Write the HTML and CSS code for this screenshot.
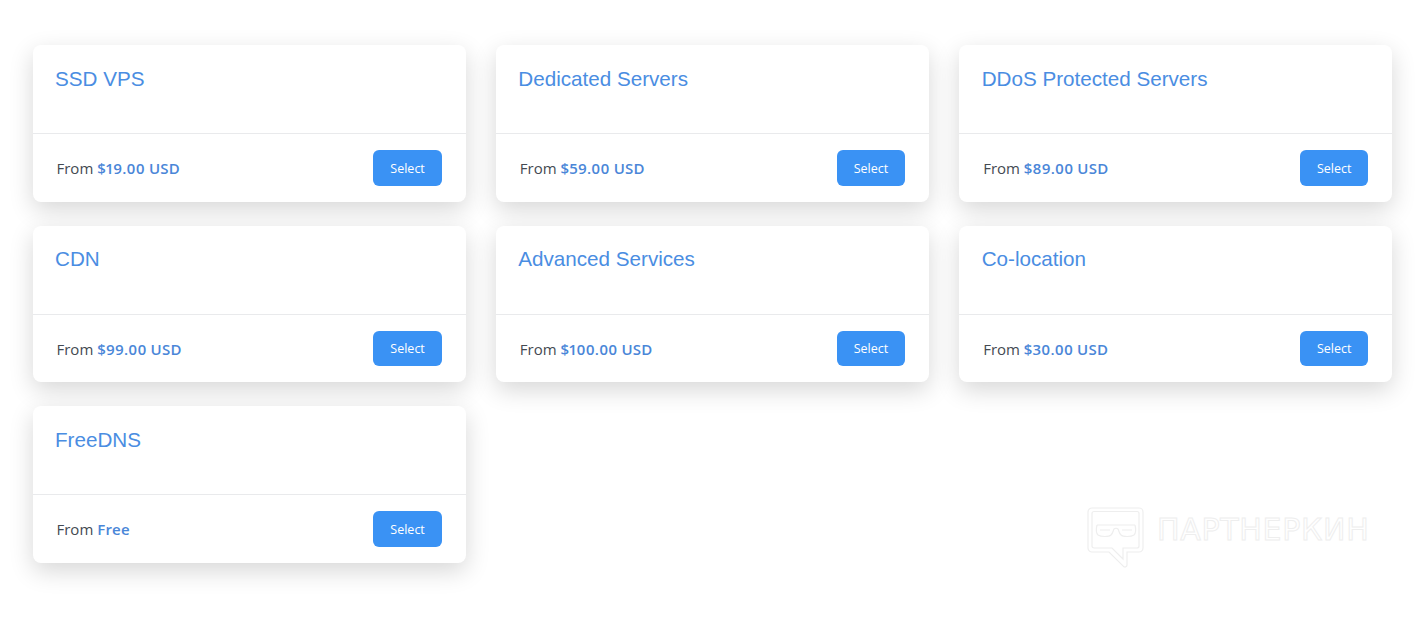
FILE: index.html
```html
<!DOCTYPE html>
<html lang="en">
<head>
<meta charset="utf-8">
<title>Products</title>
<link rel="stylesheet" href="styles.css">
</head>
<body>
<main class="grid">
  <article class="card"><h3 class="title">SSD VPS</h3><div class="foot"><span class="price">From <b>$19.00 USD</b></span><a class="btn">Select</a></div></article>
  <article class="card"><h3 class="title">Dedicated Servers</h3><div class="foot"><span class="price">From <b>$59.00 USD</b></span><a class="btn">Select</a></div></article>
  <article class="card"><h3 class="title">DDoS Protected Servers</h3><div class="foot"><span class="price">From <b>$89.00 USD</b></span><a class="btn">Select</a></div></article>
  <article class="card"><h3 class="title">CDN</h3><div class="foot"><span class="price">From <b>$99.00 USD</b></span><a class="btn">Select</a></div></article>
  <article class="card"><h3 class="title">Advanced Services</h3><div class="foot"><span class="price">From <b>$100.00 USD</b></span><a class="btn">Select</a></div></article>
  <article class="card"><h3 class="title">Co-location</h3><div class="foot"><span class="price">From <b>$30.00 USD</b></span><a class="btn">Select</a></div></article>
  <article class="card"><h3 class="title">FreeDNS</h3><div class="foot"><span class="price">From <b>Free</b></span><a class="btn">Select</a></div></article>
</main>
<div class="mark">
  <svg class="mark-icon" width="58" height="62" viewBox="0 0 58 62" fill="none" stroke="#eeeeee" stroke-width="1.200">
    <path d="M5 1h47a4 4 0 0 1 4 4v36a4 4 0 0 1-4 4H40v13a2 2 0 0 1-3.500 1.300L22 45H5a4 4 0 0 1-4-4V5a4 4 0 0 1 4-4z"/>
    <path d="M7 4.500h43a2 2 0 0 1 2 2v32.500a2 2 0 0 1-2 2H36v11L25 41H7a2 2 0 0 1-2-2V6.500a2 2 0 0 1 2-2z"/>
    <path d="M10 18h38M10 18c-1 4-1 8 1 10 3 2 11 2 13 0 2-2 2-4 3-6 1-1 3-1 4 0 1 2 1 4 3 6 2 2 10 2 13 0 2-2 2-6 1-10"/>
    <path d="M13 23h10M35 23h10"/>
  </svg>
  <span class="mark-text">ПАРТНЕРКИН</span>
</div>
</body>
</html>
```
FILE: styles.css
```css
* { box-sizing: border-box; }
html, body { margin: 0; background: #fff; }
body {
  position: relative;
  height: 620px;
  overflow: hidden;
  padding: 45px 27.500px 0 32.500px;
  font-family: "Open Sans", "Noto Sans", sans-serif;
}
.grid {
  display: grid;
  grid-template-columns: repeat(3, 433.33px);
  grid-auto-rows: 156.5px;
  column-gap: 30px;
  row-gap: 24px;
}
.card {
  display: flex;
  flex-direction: column;
  background: #fff;
  border-radius: 8px;
  box-shadow: 0 8px 24px rgba(0, 0, 0, 0.16);
}
.title {
  height: 89px;
  margin: 0;
  padding: 21.800px 22.500px 0;
  border-bottom: 1px solid #e9eaec;
  font: 400 20.640px/24px "Liberation Sans", Arial, sans-serif;
  color: #4a8de2;
}
.foot {
  flex: 1;
  display: flex;
  align-items: center;
  justify-content: space-between;
  padding: 0.500px 24px 0;
}
.price {
  padding-top: 0.700px;
  font-size: 15px;
  color: #444a52;
}
.price b {
  font-weight: 600;
  font-variant-numeric: proportional-nums;
  letter-spacing: 0.200px;
  color: #4a86d8;
}
.btn {
  display: flex;
  align-items: center;
  justify-content: center;
  width: 68.500px;
  height: 35.600px;
  border-radius: 6px;
  background: #3a92f4;
  color: #fff;
  font-size: 12.500px;
}
.mark {
  position: absolute;
  left: 1087px;
  top: 507px;
  display: flex;
  gap: 12px;
  align-items: flex-start;
}
.mark-text {
  font: 400 30px/46px "DejaVu Sans", sans-serif;
  letter-spacing: 0.700px;
  color: #fff;
  -webkit-text-stroke: 1px #eeeeee;
}
```
